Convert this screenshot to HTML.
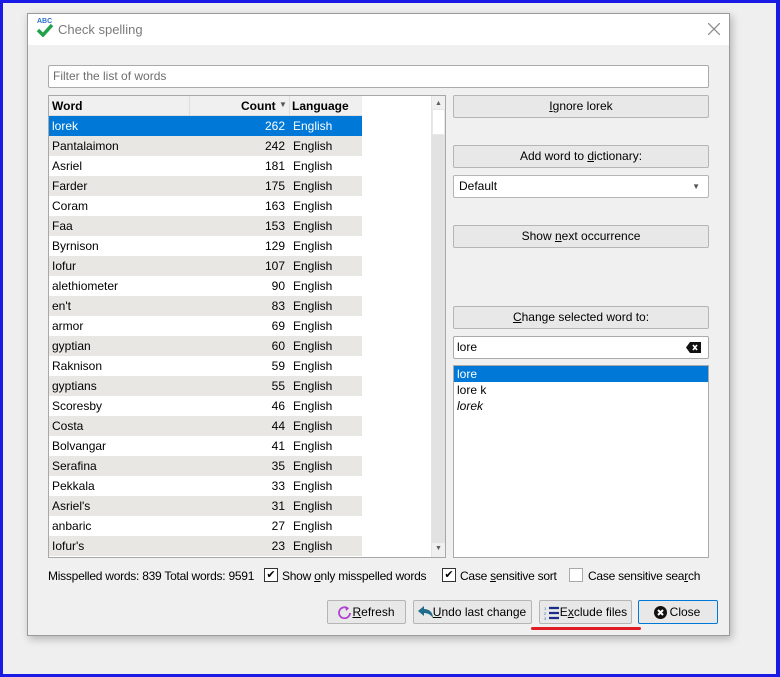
<!DOCTYPE html>
<html><head><style>
*{box-sizing:border-box;margin:0;padding:0}
body{width:780px;height:677px;background:#1a1ae6;font-family:"Liberation Sans",sans-serif;font-size:12px;color:#000;position:relative;overflow:hidden}
.bg{position:absolute;left:3px;top:3px;width:773px;height:671px;background:#efefef}
.dlg{position:absolute;left:27px;top:13px;width:703px;height:623px;background:#f0f0f0;border:1px solid #9a9a9a;box-shadow:2px 3px 8px rgba(0,0,0,.25)}
.title{position:absolute;left:0;top:0;width:701px;height:31px;background:#fff}
.a{position:absolute}
.btn{position:absolute;background:#e8e8e8;border:1px solid #b5b5b5;border-radius:2px;text-align:center;line-height:20px;white-space:nowrap}
u{text-decoration:underline}
.row{position:absolute;left:0;width:313px;height:20px;line-height:20px}
.row span{position:absolute}
.st{letter-spacing:-0.25px}
</style></head><body>
<div class="bg"></div>
<div class="dlg">
 <div class="title">
  <div class="a" style="left:9px;top:4px;font-size:7px;color:#2a6fc9;font-weight:bold">ABC</div>
  <svg class="a" style="left:8px;top:9px" width="18" height="14"><path d="M2 7 L7 12 L16 2" stroke="#1fa24a" stroke-width="3.5" fill="none"/></svg>
  <div class="a" style="left:30px;top:8px;font-size:13px;color:#7a7a7a">Check spelling</div>
  <svg class="a" style="left:680px;top:9px" width="12" height="12"><path d="M0 0L12 12M12 0L0 12" stroke="#888" stroke-width="1.2"/></svg>
 </div>
 <div class="a" style="left:20px;top:51px;width:661px;height:23px;background:#fff;border:1px solid #aaa;border-radius:2px;padding-left:4px;line-height:21px;color:#6d6d6d">Filter the list of words</div>
 <!-- table -->
 <div class="a" style="left:20px;top:81px;width:398px;height:463px;background:#fff;border:1px solid #a8a8a8">
  <div class="a" style="left:0;top:0;width:313px;height:20px;background:#f0f0f0;border-bottom:1px solid #ddd;font-weight:bold;line-height:20px">
   <span class="a" style="left:3px">Word</span>
   <span class="a" style="left:140px;top:0;height:20px;border-left:1px solid #ddd"></span>
   <span class="a" style="left:192px">Count</span>
   <span class="a" style="left:230px;top:-1px;font-size:8px;color:#555">▼</span>
   <span class="a" style="left:240px;top:0;height:20px;border-left:1px solid #ddd"></span>
   <span class="a" style="left:243px">Language</span>
  </div>
  <div id="rows" class="a" style="left:0;top:20px"></div>
  <div class="a" style="left:382px;top:0;width:14px;height:461px;background:#f0f0f0;border-left:1px solid #e4e4e4">
   <div class="a" style="left:3px;top:4px;font-size:7px;color:#606060">▲</div>
   <div class="a" style="left:0;top:13px;width:13px;height:26px;background:#fff;border:1px solid #e8e8e8"></div>
   <div class="a" style="left:0;top:39px;width:13px;height:408px;background:#e2e2e2"></div>
   <div class="a" style="left:3px;top:449px;font-size:7px;color:#606060">▼</div>
  </div>
 </div>
 <!-- right -->
 <div class="btn" style="left:425px;top:81px;width:256px;height:23px"><u>I</u>gnore lorek</div>
 <div class="btn" style="left:425px;top:131px;width:256px;height:23px">Add word to <u>d</u>ictionary:</div>
 <div class="a" style="left:425px;top:161px;width:256px;height:23px;background:#fff;border:1px solid #b5b5b5;border-radius:2px;line-height:21px;padding-left:5px">Default<span class="a" style="right:8px;top:0;font-size:8px;color:#555">▼</span></div>
 <div class="btn" style="left:425px;top:211px;width:256px;height:23px">Show <u>n</u>ext occurrence</div>
 <div class="btn" style="left:425px;top:292px;width:256px;height:23px"><u>C</u>hange selected word to:</div>
 <div class="a" style="left:425px;top:322px;width:256px;height:23px;background:#fff;border:1px solid #aaa;border-radius:2px;line-height:21px;padding-left:3px">lore
  <svg class="a" style="left:232px;top:5px" width="16" height="11"><path d="M4 0H15V11H4L0 5.5Z" fill="#111"/><path d="M7 3L11 8M11 3L7 8" stroke="#fff" stroke-width="1.6"/></svg></div>
 <div class="a" style="left:425px;top:351px;width:256px;height:193px;background:#fff;border:1px solid #aaa">
  <div style="background:#0078d7;color:#fff;height:16px;line-height:16px;padding-left:3px">lore</div>
  <div style="height:16px;line-height:16px;padding-left:3px">lore k</div>
  <div style="height:16px;line-height:16px;padding-left:3px;font-style:italic">lorek</div>
 </div>
 <!-- status -->
 <div class="a st" style="left:20px;top:554px;line-height:16px;white-space:nowrap">Misspelled words: 839 Total words: 9591</div>
 <div class="a" style="left:236px;top:554px;width:14px;height:14px;background:#fff;border:1px solid #333;font-size:11px;line-height:12px;text-align:center">✔</div>
 <div class="a st" style="left:254px;top:554px;line-height:16px;white-space:nowrap">Show <u>o</u>nly misspelled words</div>
 <div class="a" style="left:414px;top:554px;width:14px;height:14px;background:#fff;border:1px solid #333;font-size:11px;line-height:12px;text-align:center">✔</div>
 <div class="a st" style="left:432px;top:554px;line-height:16px;white-space:nowrap">Case <u>s</u>ensitive sort</div>
 <div class="a" style="left:541px;top:554px;width:14px;height:14px;background:#fff;border:1px solid #aaa"></div>
 <div class="a st" style="left:560px;top:554px;line-height:16px;white-space:nowrap">Case sensitive sea<u>r</u>ch</div>
 <!-- buttons -->
 <div class="btn" style="left:299px;top:586px;width:79px;height:24px;line-height:22px;padding-left:14px"><svg class="a" style="left:9px;top:4px" width="16" height="16"><path d="M11 3.5A5.5 5.5 0 1 0 13 8" stroke="#b040d0" stroke-width="1.8" fill="none"/><path d="M8 1L12 3.5L9 6Z" fill="#b040d0"/></svg><u>R</u>efresh</div>
 <div class="btn" style="left:385px;top:586px;width:119px;height:24px;line-height:22px;padding-left:14px"><svg class="a" style="left:4px;top:5px" width="16" height="14"><path d="M0 5L6 0V3C11 3 15 6 15 12C13 9 10 7 6 7V10Z" fill="#1f6d8a"/></svg><u>U</u>ndo last change</div>
 <div class="btn" style="left:511px;top:586px;width:93px;height:24px;line-height:22px;padding-left:16px"><svg class="a" style="left:4px;top:5px" width="16" height="14"><path d="M5 2H15M5 7H15M5 12H15" stroke="#1c2a8a" stroke-width="2.2"/><text x="0" y="4" font-size="4" fill="#2a6fc9">1</text><text x="0" y="9" font-size="4" fill="#2a6fc9">2</text><text x="0" y="14" font-size="4" fill="#2a6fc9">3</text></svg>E<u>x</u>clude files</div>
 <div class="btn" style="left:610px;top:586px;width:80px;height:24px;line-height:22px;border-color:#0078d7;padding-left:14px"><svg class="a" style="left:15px;top:5px" width="13" height="13"><circle cx="6.5" cy="6.5" r="6.5" fill="#111"/><path d="M4 4L9 9M9 4L4 9" stroke="#fff" stroke-width="2"/></svg>Close</div>
 <div class="a" style="left:503px;top:613px;width:110px;height:3px;background:#e01c24;border-radius:2px"></div>
</div>
<script>
var d=[["lorek",262],["Pantalaimon",242],["Asriel",181],["Farder",175],["Coram",163],["Faa",153],["Byrnison",129],["Iofur",107],["alethiometer",90],["en't",83],["armor",69],["gyptian",60],["Raknison",59],["gyptians",55],["Scoresby",46],["Costa",44],["Bolvangar",41],["Serafina",35],["Pekkala",33],["Asriel's",31],["anbaric",27],["Iofur's",23]];
var h="";d.forEach(function(r,i){var bg=i==0?"#0078d7":(i%2?"#e9e7e3":"#fff");var c=i==0?"#fff":"#000";
h+='<div class="row" style="top:'+(i*20)+'px;background:'+bg+';color:'+c+'"><span style="left:3px">'+r[0]+'</span><span style="right:77px">'+r[1]+'</span><span style="left:244px">English</span></div>';});
document.getElementById("rows").innerHTML=h;
</script>
</body></html>
